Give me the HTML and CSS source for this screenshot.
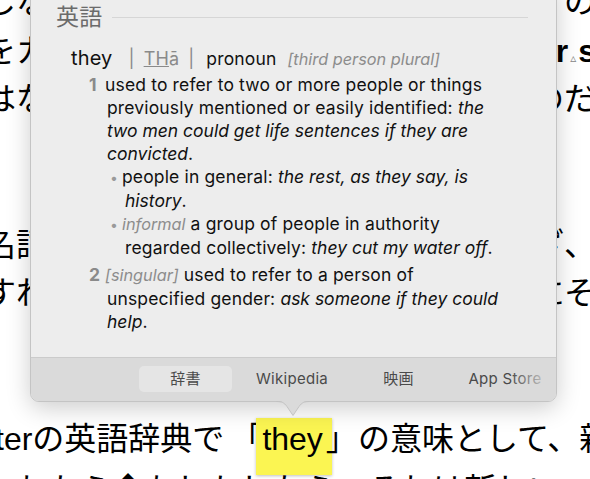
FILE: index.html
```html
<!DOCTYPE html>
<html lang="ja">
<head>
  <meta charset="UTF-8">
  <title>they - 辞書</title>
  <link rel="stylesheet" href="styles.css">
</head>
<body>
  <main class="page">
    <div class="para">
      <div class="line"><span>しなかった</span><span class="tail">多くの</span></div>
      <div class="line"><span>をカバー</span><span class="tail"><b>or</b><span class="mark">▵</span><b>s</b></span></div>
      <div class="line"><span>はない</span><span class="tail">ものだ</span></div>
    </div>
    <div class="para">
      <div class="line"><span>名詞の</span><span class="tail">いござ、</span></div>
      <div class="line"><span>すれば</span><span class="tail">ためにそ</span></div>
    </div>
    <div class="para">
      <div class="line sentence">terの英語辞典で<span class="open">「</span><span class="hl">they</span><span class="close">」</span>の意味として、新</div>
      <div class="line next">ーれたら◆もしかしたら、それは新しい</div>
    </div>
  </main>

  <div class="popover">
    <div class="entry">
      <h2 class="dict-name">英語</h2>
      <div class="headline">
        <span class="hw">they</span><span class="pron"><span class="bar">|</span><u>TH</u>ā<span class="bar">|</span></span><span class="pos">pronoun</span><span class="gram">[third person plural]</span>
      </div>
      <div class="sense"><span class="num">1</span>used to refer to two or more people or things<br>previously mentioned or easily identified: <i>the<br>two men could get life sentences if they are<br>convicted</i>.</div>
      <div class="sub">people in general: <i>the rest, as they say, is<br>history</i>.</div>
      <div class="sub"><span class="gram">informal</span> a group of people in authority<br>regarded collectively: <i>they cut my water off</i>.</div>
      <div class="sense second"><span class="num">2</span><span class="gram">[singular]</span> used to refer to a person of<br>unspecified gender: <i>ask someone if they could<br>help</i>.</div>
      <div class="origin">ORIGIN</div>
    </div>
    <nav class="tabs">
      <span class="tab active">辞書</span>
      <span class="tab">Wikipedia</span>
      <span class="tab">映画</span>
      <span class="tab">App Store</span>
    </nav>
    <svg class="arrow" width="34" height="17" viewBox="0 0 34 17">
      <path d="M0 1 C6 1 8 2 11 6 L17 15 L23 6 C26 2 28 1 34 1 Z" fill="#dadada"/>
      <path d="M0 1.5 C6 1.5 8 2.5 11 6.5 L17 15.5 L23 6.5 C26 2.5 28 1.5 34 1.5" fill="none" stroke="#c2c2c2" stroke-width="1"/>
    </svg>
  </div>
</body>
</html>
```

FILE: styles.css
```css
* {
  box-sizing: border-box;
}

body {
  margin: 0;
  height: 479px;
  overflow: hidden;
  position: relative;
  background: #ffffff;
  color: #000;
  font-family: "Liberation Sans", "Noto Sans CJK JP", sans-serif;
  font-size: 32px;
  line-height: 48.5px;
}

/* page text behind the lookup panel */
.page {
  margin-top: -22px;
}

.para {
  margin-bottom: 97px;
}

.line {
  display: flex;
  justify-content: space-between;
  height: 48.5px;
  margin-left: -16px;
  white-space: nowrap;
}

.line .tail {
  margin-right: -6px;
}

.mark {
  font-family: "DejaVu Sans", sans-serif;
  font-size: 12px;
  color: #888;
  margin: 0 2px;
}

.sentence {
  display: block;
  margin-left: -5px;
}

.line.next {
  margin-top: 3px;
}

.open {
  margin: 0 -6px 0 6px;
}

.close {
  margin-left: -6px;
}

.hl {
  background: #fbf552;
  padding: 3px 9px 18px 6px;
  box-shadow: 0 1px 3px rgba(0, 0, 0, 0.25);
}

/* lookup panel */
.popover {
  position: absolute;
  left: 30px;
  top: -20px;
  width: 527px;
  height: 422px;
  display: flex;
  flex-direction: column;
  background: #ededed;
  border: 1px solid #c4c4c4;
  border-radius: 9px;
  box-shadow: 0 6px 24px rgba(0, 0, 0, 0.2);
  font-family: Inter, "Noto Sans CJK JP", sans-serif;
  font-size: 17.5px;
  letter-spacing: 0.15px;
  line-height: 23px;
  color: #111;
}

.entry {
  flex: 1;
  overflow: hidden;
  padding: 21px 28px 0 25px;
}

.dict-name {
  display: flex;
  align-items: center;
  gap: 10px;
  margin: 0;
  font-size: 23px;
  line-height: 30px;
  font-weight: 400;
  color: #6b6b6b;
}

.dict-name::after {
  content: "";
  flex: 1;
  height: 1px;
  background: #d6d6d6;
}

.headline {
  margin: 12px 0 0 15px;
  line-height: 28px;
  white-space: nowrap;
}

.hw {
  font-size: 20px;
  margin-right: 16px;
}

.pron {
  font-size: 18px;
  color: #8a8a8a;
  margin-right: 12px;
}

.bar {
  margin-right: 9px;
}

.pron .bar:last-child {
  margin: 0 0 0 9px;
}

.pos {
  margin-right: 11px;
}

i {
  letter-spacing: 0;
}

.gram {
  font-style: italic;
  font-size: 16.3px;
  letter-spacing: 0;
  color: #8c8c8c;
}

.sense {
  padding-left: 51px;
  text-indent: -18px;
  white-space: nowrap;
}

.sense.second {
  margin-top: 4px;
}

.num {
  display: inline-block;
  width: 16px;
  text-indent: 0;
  font-weight: 700;
  color: #8a8a8a;
}

.sub {
  padding-left: 69px;
  text-indent: -15px;
  white-space: nowrap;
}

.sub::before {
  content: "•";
  display: inline-block;
  width: 12px;
  text-indent: 0;
  color: #9a9a9a;
  font-size: 14px;
}

.origin {
  margin-top: 19px;
  padding-left: 17px;
  font-size: 13px;
  line-height: 20px;
  letter-spacing: 1.5px;
  color: #8a8a8a;
}

.tabs {
  flex: none;
  position: relative;
  display: flex;
  gap: 13.5px;
  height: 44px;
  padding: 8px 0 0 108px;
  overflow: hidden;
  border-top: 1px solid #cbcbcb;
  border-radius: 0 0 8px 8px;
  background: #dadada;
}

.tabs::after {
  content: "";
  position: absolute;
  top: 0;
  right: 0;
  bottom: 0;
  width: 46px;
  background: linear-gradient(to right, rgba(218, 218, 218, 0), #dadada 90%);
}

.tab {
  flex: none;
  width: 93px;
  height: 26px;
  line-height: 26px;
  text-align: center;
  font-size: 15px;
  letter-spacing: 0.3px;
  color: #4a4a4a;
  border-radius: 5px;
}

.tab.active {
  background: #e5e5e5;
}

.arrow {
  position: absolute;
  left: 245px;
  top: calc(100% - 1px);
}
```
